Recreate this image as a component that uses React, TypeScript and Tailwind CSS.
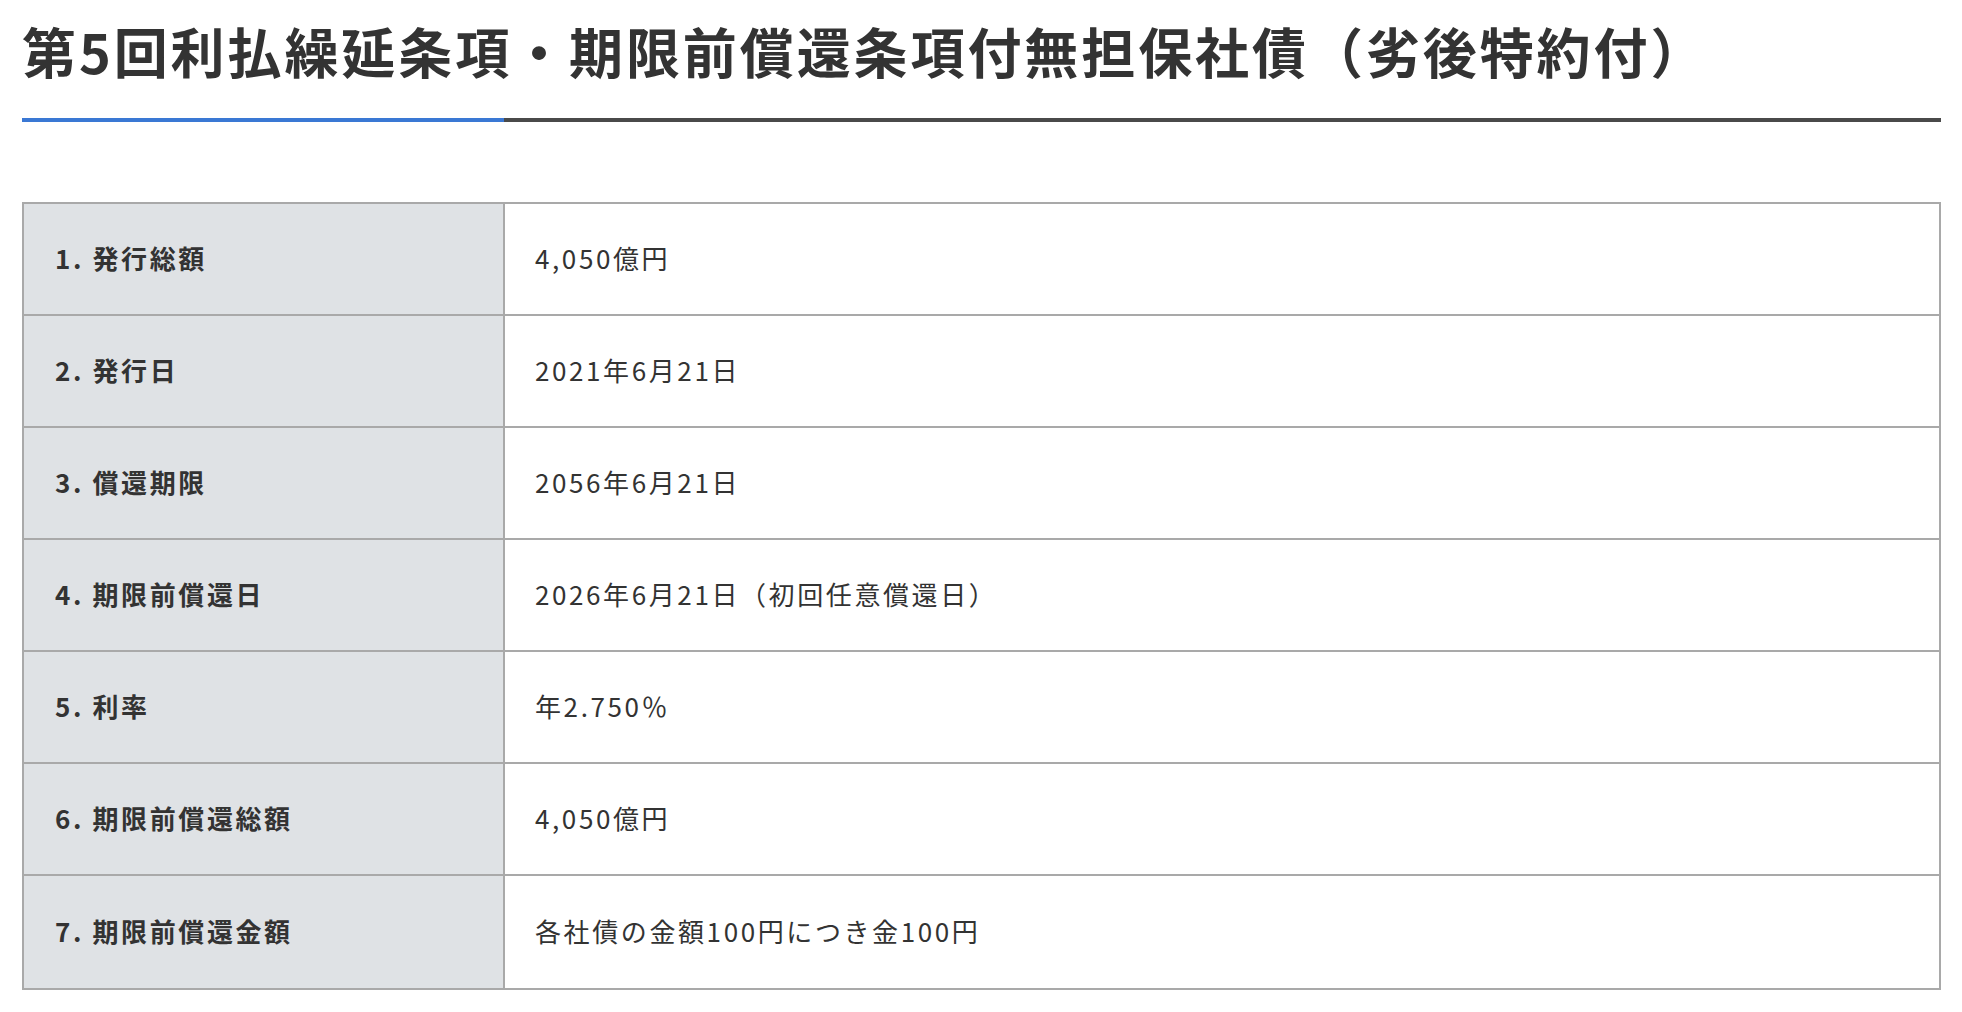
import React from "react";

const rows: [string, string][] = [
  ["1. 発行総額", "4,050億円"],
  ["2. 発行日", "2021年6月21日"],
  ["3. 償還期限", "2056年6月21日"],
  ["4. 期限前償還日", "2026年6月21日（初回任意償還日）"],
  ["5. 利率", "年2.750％"],
  ["6. 期限前償還総額", "4,050億円"],
  ["7. 期限前償還金額", "各社債の金額100円につき金100円"],
];

export default function App() {
  return (
    <div
      className="min-h-screen bg-white pl-[22px] pr-[21px] text-[#333333]"
      style={{ fontFamily: '"Noto Sans CJK JP", "Noto Sans", sans-serif' }}
    >
      <h1 className="pt-[12px] text-[54px] font-bold leading-[78px] tracking-[0.054em]">
        第5回利払繰延条項・期限前償還条項付無担保社債（劣後特約付）
      </h1>
      <div className="mt-[28px] flex h-[4px]">
        <div className="w-[482px] bg-[#3a78d4]" />
        <div className="flex-1 bg-[#4a4a4a]" />
      </div>
      <div className="mt-[80px] border-2 border-[#a9a9a9]">
        {rows.map(([k, v], i) => (
          <div
            key={k}
            className={`flex h-[112px] ${i < rows.length - 1 ? "border-b-2 border-[#a9a9a9]" : ""}`}
          >
            <div className="flex w-[481px] items-center border-r-2 border-[#a9a9a9] bg-[#dfe2e5] px-[31px] pb-[4px] text-[26px] font-bold tracking-[0.1em]">
              {k}
            </div>
            <div className="flex flex-1 items-center px-[30px] pb-[4px] text-[26px] tracking-[0.1em]">
              {v}
            </div>
          </div>
        ))}
      </div>
    </div>
  );
}
